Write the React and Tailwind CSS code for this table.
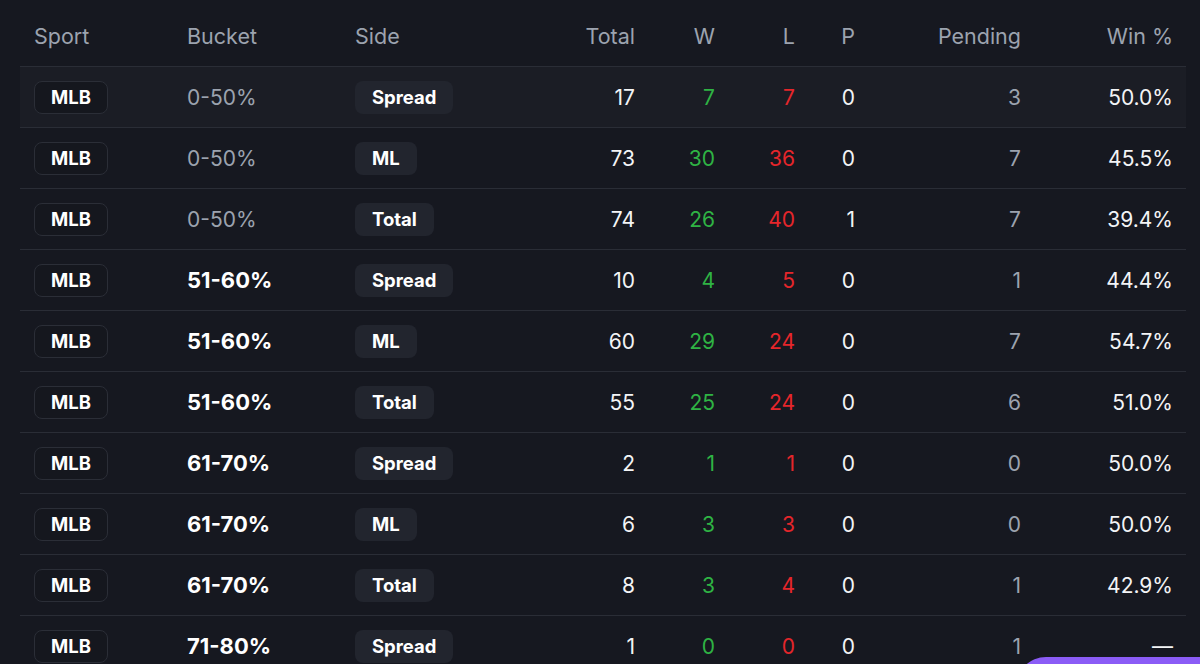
import React from "react";

const rows = [
  ["0-50%", "Spread", 17, 7, 7, 0, 3, "50.0%"],
  ["0-50%", "ML", 73, 30, 36, 0, 7, "45.5%"],
  ["0-50%", "Total", 74, 26, 40, 1, 7, "39.4%"],
  ["51-60%", "Spread", 10, 4, 5, 0, 1, "44.4%"],
  ["51-60%", "ML", 60, 29, 24, 0, 7, "54.7%"],
  ["51-60%", "Total", 55, 25, 24, 0, 6, "51.0%"],
  ["61-70%", "Spread", 2, 1, 1, 0, 0, "50.0%"],
  ["61-70%", "ML", 6, 3, 3, 0, 0, "50.0%"],
  ["61-70%", "Total", 8, 3, 4, 0, 1, "42.9%"],
  ["71-80%", "Spread", 1, 0, 0, 0, 1, "—"],
];

const grid = "grid grid-cols-[153px_168px_208px_100px_80px_80px_60px_166px_151px] items-center";

export default function App() {
  return (
    <div
      className="relative h-[664px] w-[1200px] overflow-hidden bg-[#161820] text-[#f3f4f6]"
      style={{ fontFamily: "Inter, 'Noto Sans', sans-serif" }}
    >
      <div className="ml-[20px] w-[1166px]">
        <div className={`${grid} h-[66px] pt-[6px] text-[21.5px] text-[#9ca3af]`}>
          <div className="pl-[14px]">Sport</div>
          <div className="pl-[14px]">Bucket</div>
          <div className="pl-[14px]">Side</div>
          <div className="pr-[14px] text-right">Total</div>
          <div className="pr-[14px] text-right">W</div>
          <div className="pr-[14px] text-right">L</div>
          <div className="pr-[14px] text-right">P</div>
          <div className="pr-[14px] text-right">Pending</div>
          <div className="pr-[13px] text-right">Win %</div>
        </div>
        {rows.map((r, i) => {
          const low = r[0] === "0-50%";
          return (
            <div
              key={i}
              className={`${grid} h-[61px] border-t border-[#2a2d36] pt-[1px] text-[21px] ${i === 0 ? "bg-[#1b1d25]" : ""}`}
            >
              <div className="pl-[14px]">
                <span className="inline-flex h-[33px] w-[74px] items-center justify-center rounded-[8px] border border-[#2b2e37] bg-[#15171e] text-[18.5px] font-bold text-white">
                  MLB
                </span>
              </div>
              <div className={`pl-[14px] ${low ? "font-normal text-[#9ca3af]" : "text-[22px] font-bold text-white"}`}>
                {r[0]}
              </div>
              <div className="pl-[14px]">
                <span className="inline-flex h-[33px] items-center rounded-[8px] bg-[#22252e] px-[17px] text-[18.5px] font-bold text-white">
                  {r[1]}
                </span>
              </div>
              <div className="pr-[14px] text-right">{r[2]}</div>
              <div className="pr-[14px] text-right text-[#2fb344]">{r[3]}</div>
              <div className="pr-[14px] text-right text-[#e5262b]">{r[4]}</div>
              <div className="pr-[14px] text-right">{r[5]}</div>
              <div className="pr-[14px] text-right text-[#9ca3af]">{r[6]}</div>
              <div className="pr-[13px] text-right">{r[7]}</div>
            </div>
          );
        })}
      </div>
      <div className="absolute left-[1016px] top-[657px] h-[60px] w-[240px] rounded-full bg-[#8b5cf6]" />
    </div>
  );
}
